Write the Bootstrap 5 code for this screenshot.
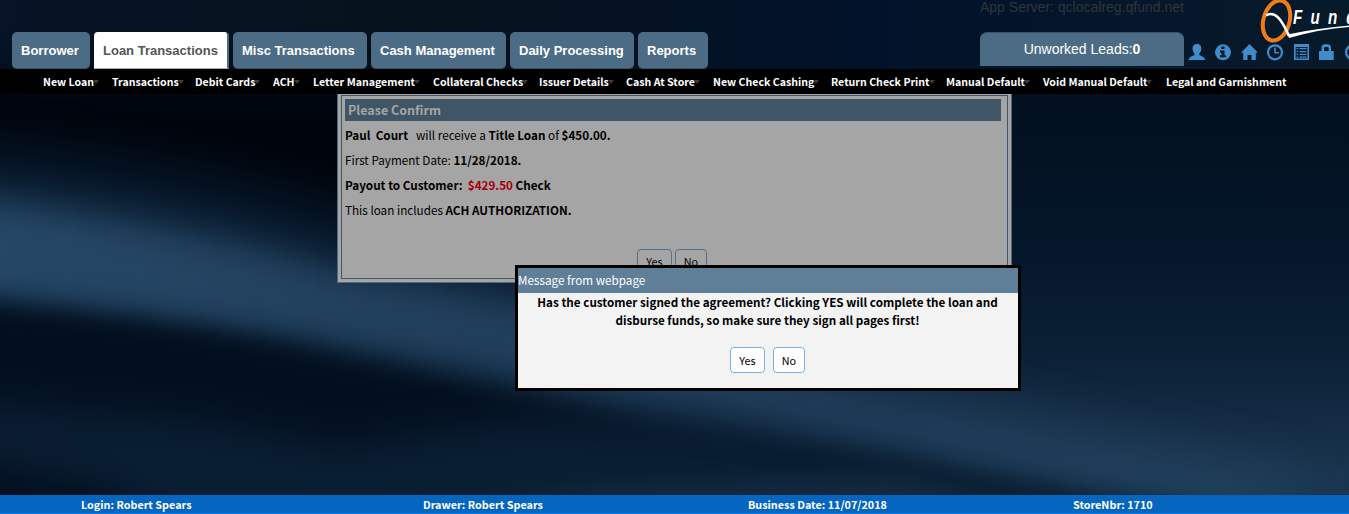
<!DOCTYPE html>
<html lang="en">
<head>
<meta charset="utf-8">
<meta name="viewport" content="width=device-width, initial-scale=1">
<title>QFund</title>
<link href="https://cdn.jsdelivr.net/npm/bootstrap@5.3.0/dist/css/bootstrap.min.css" rel="stylesheet">
<style>
html,body{height:100%}
body{background:#03101f;overflow:hidden;font-family:"Noto Sans CJK SC","Noto Sans",sans-serif;font-size:11.7px;line-height:18px;color:#000}
.backdrop{z-index:-1}
.backdrop filter{color-interpolation-filters:sRGB}
.top{height:69px;font-family:"Liberation Sans",Arial,sans-serif}
.tabs{padding:32px 0 0 12px;gap:4px}
.tab{height:37px;line-height:37px;border-radius:5px;background:#4c6c86;color:#fff;font-weight:700;font-size:13px;padding-left:9px;text-decoration:none;border-bottom:1px solid #38536b;white-space:nowrap}
.tab.current{background:#fff;color:#555;border-radius:4px 4px 0 0;border-right:2px solid #4c6c86;border-bottom-color:#aab}
.server{width:204px}
.server-name{height:32px;font-size:14px;line-height:14px;color:#30353b;white-space:nowrap}
.leads{height:34px;line-height:33px;background:#4c6c86;border-radius:7px 7px 0 0;border-top:1px solid #38536b;color:#fff;font-size:14px;text-align:center}
.menu-bar{height:25px;background:#000;padding-left:43px}
.menu-bar a{color:#fff;font-weight:700;font-size:10.6px;line-height:25px;text-decoration:none;white-space:nowrap;flex:none}
.menu-bar a.drop::after{content:"";display:inline-block;border:3px solid transparent;border-top:4px solid #3b3b3b;border-bottom:0;margin-left:-1px;vertical-align:2px;margin-right:-5px}
.confirm{width:675px;height:189px;margin-left:337px;background:#a5a5a5;border:1px solid #53687a;border-top:0;padding:1px 3px 3px}
.confirm-inner{height:184px;border:1px solid #40576a;padding:3px 6px 0 3px}
.confirm h1{height:22px;line-height:22px;background:#405566;color:#a5a5a5;font-size:12.5px;font-weight:700;padding-left:3px;margin:0 0 1px}
.confirm p{margin:0;line-height:25px;white-space:pre}
.confirm-actions{padding:27px 2px 0 0;gap:3px}
.amount{color:#a60009}
.choice{height:26px;border:1px solid #7db0dc;border-radius:4px;background:#fff;padding:0;font-size:10.8px;line-height:25px;color:#000}
.choice.yes{width:35px}.choice.no{width:32px}
.confirm .choice{background:#a5a5a5;border-color:#52718c;line-height:23px}
.confirm .choice{display:flex;justify-content:center;align-items:flex-start}
.ask{left:515px;top:265px;width:506px;height:126px;border:3px solid #000;background:#f3f3f3}
.ask h2{height:25px;line-height:24px;background:#5f7e98;color:#fff;font-size:11.7px;font-weight:400;margin:0}
.ask-text{padding-right:1px;font-size:11.68px}
.ask-actions{padding:18px 1px 0 0}
.status{height:19px;background:#0665bf;border-bottom:1px solid #0b7cec;color:#fff;font-weight:700;font-size:10.8px;line-height:19px;display:grid;grid-template-columns:342px 325px 325px auto;padding-left:81px}
</style>
</head>
<body class="d-flex flex-column">
<svg class="backdrop position-absolute top-0 start-0" width="1349" height="514" viewBox="0 0 1349 514" preserveAspectRatio="none">
<defs>
<linearGradient id="base" x1="0" y1="0" x2="0" y2="1"><stop offset="0" stop-color="#05131f"/><stop offset=".2" stop-color="#02101f"/><stop offset=".5" stop-color="#05172b"/><stop offset=".68" stop-color="#0b2035"/><stop offset=".82" stop-color="#142b44"/><stop offset=".92" stop-color="#1a354f"/><stop offset="1" stop-color="#1b3752"/></linearGradient>
<linearGradient id="beam" x1="0" x2="1"><stop offset="0" stop-color="#284b6c"/><stop offset=".35" stop-color="#203d58"/><stop offset=".7" stop-color="#1c3752"/><stop offset="1" stop-color="#1f3d57"/></linearGradient>
<linearGradient id="topstrip" x1="0" x2="1"><stop offset="0" stop-color="#071326"/><stop offset=".3" stop-color="#06121c"/><stop offset=".65" stop-color="#02122a"/><stop offset="1" stop-color="#071a2a"/></linearGradient>
<filter id="soft" x="-20%" y="-60%" width="140%" height="220%"><feGaussianBlur stdDeviation="20"/></filter>
<filter id="fine" x="-20%" y="-60%" width="140%" height="220%"><feGaussianBlur stdDeviation="12"/></filter>
</defs>
<rect width="1349" height="514" fill="url(#base)"/>
<rect width="1349" height="69" fill="url(#topstrip)"/>
<path d="M-60 80H480L620 250L700 330L-60 200Z" fill="#00050d" filter="url(#soft)"/>
<path d="M-80 135Q150 152 340 205L620 290L600 340L-80 250Z" fill="#061729" filter="url(#soft)"/>
<path d="M-80 188Q180 218 340 265Q560 290 800 360L1300 470V560L1200 530L800 430L340 350L-80 290Z" fill="url(#beam)" filter="url(#soft)"/>
<path d="M-80 215Q150 228 340 282L560 330L800 395L1250 485V512L1000 467L800 424Q560 376 340 338Q180 305 -80 290Z" fill="#244665" opacity=".4" filter="url(#fine)"/>
<path d="M-80 300Q180 318 340 355Q520 390 650 424L900 464L1200 524V620H-80Z" fill="#030f1e" filter="url(#fine)"/>
<path d="M-80 398L200 420L340 446L520 420L700 426L900 465L1200 524V620H250L120 490L-80 450Z" fill="#0b2035" opacity=".9" filter="url(#soft)"/>
<path d="M420 514L600 488L900 475L1100 520Z" fill="#183049" opacity=".7" filter="url(#fine)"/>
</svg>

<header class="top d-flex flex-shrink-0">
<nav class="tabs d-flex me-auto">
<a class="tab" style="width:78px" href="#">Borrower</a>
<a class="tab current" style="width:135px" href="#">Loan Transactions</a>
<a class="tab" style="width:134px" href="#">Misc Transactions</a>
<a class="tab" style="width:135px" href="#">Cash Management</a>
<a class="tab" style="width:124px" href="#">Daily Processing</a>
<a class="tab" style="width:70px" href="#">Reports</a>
</nav>
<div class="server">
<div class="server-name">App Server: qclocalreg.qfund.net</div>
<div class="leads">Unworked Leads:<b>0</b></div>
</div>
<svg width="165" height="69" viewBox="1184 0 165 69">
<ellipse cx="1276.500" cy="20.500" rx="13" ry="20.500" transform="rotate(16 1276.500 20.500)" fill="none" stroke="#ef7d17" stroke-width="4"/>
<path d="M1266 15.500C1275 10 1282 20 1289 36" fill="none" stroke="#fff" stroke-width="2.600"/>
<path d="M1286.500 32L1289 38Q1320 29 1349 27V25.500Q1315 28.500 1290 34Z" fill="#fff"/>
<g transform="translate(1293 24) scale(.76 1)" fill="#fff" font-family="Liberation Sans" font-weight="700" font-style="italic" font-size="20"><text x="0">F</text><text x="23">u</text><text x="46">n</text><text x="70">d</text></g>
<g fill="#428bca">
<path d="M1197 44c3.300 0 4.500 2.300 4.300 5-.2 2.300-1 3.700-1.900 4.600v1.700c2.800 1 5.600 1.800 5.600 4.700h-16.200c0-2.900 2.800-3.700 5.600-4.700v-1.700c-.9-.9-1.600-2.300-1.800-4.600-.2-2.700 1.100-5 4.400-5z"/>
<circle cx="1223" cy="52.300" r="8"/><path d="M1221.300 46.500h3.200v2.600h-3.200zm-1.300 4h4.500v4.800h1.500v2h-6v-2h1.500v-2.800h-1.500z" fill="#071727"/>
<path d="M1249.500 44l8.500 8.700h-2.200v7.300h-4.300v-5h-4v5h-4.300v-7.300h-2.200z"/>
<path d="M1294 44h15v16H1294zm1.700 3v11.500h11.700V47z" fill-rule="evenodd"/>
<path d="M1296.500 48h1.700v1.300h-1.700zm3 0h7v1.300h-7zm-3 3h1.700v1.300h-1.700zm3 0h7v1.300h-7zm-3 2.800h1.700v1.300h-1.700zm3 0h7v1.300h-7zm-3 2.700h1.700v1.300h-1.700zm3 0h7v1.300h-7z"/>
<path d="M1319 51h2.500v-3.200a3.500 3.500 0 0 1 3.500-3.500h2.500a3.500 3.500 0 0 1 3.500 3.500V51h2.700v9H1319zm5 0h4.700v-2.700q0-1.300-1.300-1.300h-2.100q-1.300 0-1.300 1.300z"/>
</g>
<g fill="none" stroke="#428bca"><circle cx="1275" cy="52.300" r="7" stroke-width="2.200"/><path d="M1275 47.500v5.300h4" stroke-width="1.600"/><circle cx="1353" cy="52.300" r="7" stroke-width="2.300"/></g>
</svg>
</header>

<nav class="menu-bar d-flex flex-shrink-0">
<a class="drop" style="width:69px" href="#">New Loan</a>
<a class="drop" style="width:83px" href="#">Transactions</a>
<a class="drop" style="width:78px" href="#">Debit Cards</a>
<a class="drop" style="width:40px" href="#">ACH</a>
<a class="drop" style="width:120px" href="#">Letter Management</a>
<a class="drop" style="width:106px" href="#">Collateral Checks</a>
<a class="drop" style="width:87px" href="#">Issuer Details</a>
<a class="drop" style="width:87px" href="#">Cash At Store</a>
<a class="drop" style="width:118px" href="#">New Check Cashing</a>
<a class="drop" style="width:115px" href="#">Return Check Print</a>
<a class="drop" style="width:97px" href="#">Manual Default</a>
<a class="drop" style="width:123px" href="#">Void Manual Default</a>
<a href="#">Legal and Garnishment</a>
</nav>

<main class="flex-grow-1">
<section class="confirm">
<div class="confirm-inner">
<h1>Please Confirm</h1>
<p><b>Paul  Court</b>   will receive a <b>Title Loan</b> of <b>$450.00.</b></p>
<p>First Payment Date: <b>11/28/2018.</b></p>
<p><b>Payout to Customer:  <span class="amount">$429.50</span> Check</b></p>
<p>This loan includes <b>ACH AUTHORIZATION.</b></p>
<div class="confirm-actions d-flex justify-content-center"><button class="choice yes">Yes</button><button class="choice no">No</button></div>
</div>
</section>
</main>

<section class="ask position-absolute" role="dialog">
<h2>Message from webpage</h2>
<div class="ask-text text-center fw-bold">Has the customer signed the agreement? Clicking YES will complete the loan and<br>disburse funds, so make sure they sign all pages first!</div>
<div class="ask-actions d-flex justify-content-center gap-2"><button class="choice yes">Yes</button><button class="choice no">No</button></div>
</section>

<footer class="status flex-shrink-0">
<span>Login: Robert Spears</span><span>Drawer: Robert Spears</span><span>Business Date: 11/07/2018</span><span>StoreNbr: 1710</span>
</footer>
<script src="https://cdn.jsdelivr.net/npm/bootstrap@5.3.0/dist/js/bootstrap.bundle.min.js"></script>
</body>
</html>
